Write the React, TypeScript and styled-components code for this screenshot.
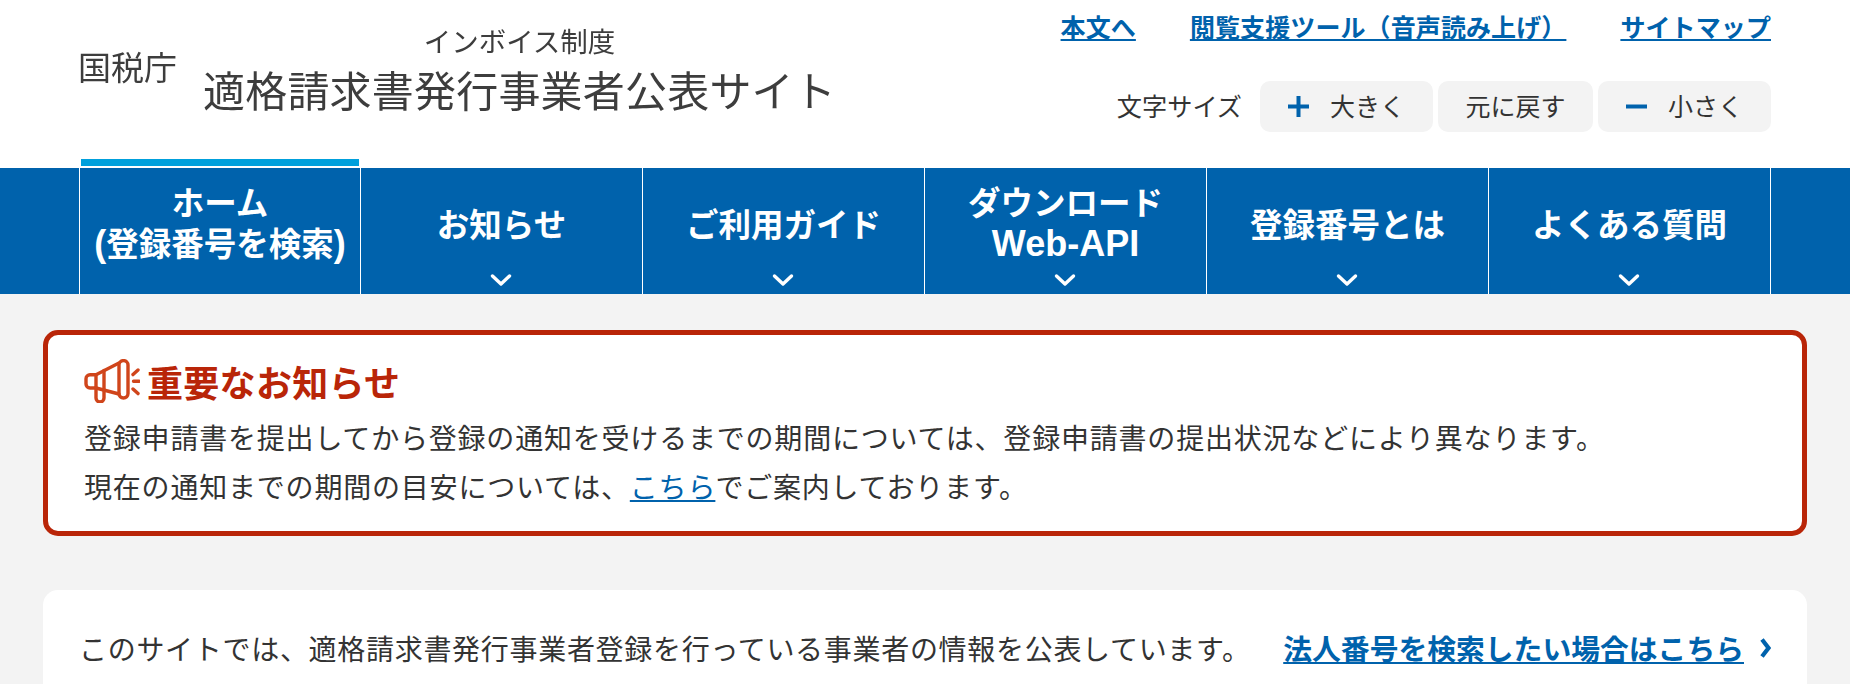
import React from "react";
import styled, { createGlobalStyle } from "styled-components";

const font = `"Noto Sans CJK JP", "Noto Sans", sans-serif`;

const Global = createGlobalStyle`
  html, body { margin: 0; padding: 0; background: #f3f3f3; font-family: ${font}; }
  body { height: 684px; overflow: hidden; }
`;

const Header = styled.header`
  height: 168px;
  background: #fff;
  display: flex;
  justify-content: space-between;
  padding: 0 79px 0 78px;
`;
const Logo = styled.div`
  display: flex;
  align-items: flex-start;
  color: #3d3d3d;
  filter: blur(0.5px);
`;
const Agency = styled.div`
  font-size: 33px;
  line-height: 40px;
  margin-top: 46px;
  margin-right: 26px;
  width: 99px;
  white-space: nowrap;
`;
const LogoText = styled.div`
  display: flex;
  flex-direction: column;
  align-items: center;
  padding-top: 21px;
`;
const Sub = styled.div`
  font-size: 27.5px;
  line-height: 38px;
`;
const SiteName = styled.div`
  font-size: 42px;
  line-height: 60px;
  letter-spacing: 0.2px;
  white-space: nowrap;
`;
const Tools = styled.div`
  display: flex;
  flex-direction: column;
  align-items: flex-end;
  padding-top: 8px;
`;
const TopLinks = styled.div`
  display: flex;
  gap: 54px;
`;
const TopLink = styled.a`
  font-size: 25px;
  line-height: 36px;
  letter-spacing: 0.1px;
  font-weight: 700;
  color: #0062ac;
  text-decoration: underline;
  white-space: nowrap;
`;
const SizeRow = styled.div`
  display: flex;
  align-items: center;
  margin-top: 37px;
  gap: 5px;
`;
const SizeLabel = styled.span`
  font-size: 25.2px;
  color: #333;
  margin-right: 13px;
  padding-bottom: 4px;
  white-space: nowrap;
`;
const SizeButton = styled.button<{ $w: number }>`
  width: ${(p) => p.$w}px;
  height: 51px;
  border: 0;
  border-radius: 10px;
  background: #f3f3f3;
  color: #333;
  font-family: ${font};
  font-size: 25px;
  display: flex;
  align-items: center;
  justify-content: center;
  gap: 21px;
  padding: 0 0 4px;
  white-space: nowrap;
`;
const IconBox = styled.svg`
  transform: translateY(2px);
`;
const Nav = styled.nav`
  height: 126px;
  background: #0062ac;
  padding-left: 79px;
  display: grid;
  grid-template-columns: 281px repeat(4, 282px) 283px;
`;
const NavItem = styled.a`
  position: relative;
  box-sizing: border-box;
  border-left: 1px solid #fff;
  &:last-child { border-right: 1px solid #fff; }
  color: #fff;
  font-size: 32.5px;
  font-weight: 700;
  line-height: 41px;
  text-align: center;
  text-decoration: none;
  display: flex;
  align-items: center;
  justify-content: center;
  padding-bottom: 18px;
  white-space: nowrap;
`;
const Latin = styled.span`
  font-family: "Liberation Sans", sans-serif;
  font-size: 36px;
`;
const ActiveBar = styled.span`
  position: absolute;
  left: 1px;
  right: 1px;
  top: -9px;
  height: 7px;
  background: #00a0dc;
`;
const Chevron = styled.svg`
  position: absolute;
  left: 50%;
  bottom: 7px;
  margin-left: -12px;
`;
const Main = styled.main`
  padding: 36px 43px 0 43px;
`;
const Alert = styled.section`
  height: 206px;
  box-sizing: border-box;
  border: 5px solid #b92508;
  border-radius: 15px;
  background: #fff;
  padding: 21px 36px 0 36px;
`;
const AlertTitle = styled.h2`
  margin: 0 0 7px;
  display: flex;
  align-items: center;
  gap: 7px;
  color: #b92508;
  font-size: 36px;
  letter-spacing: 0.3px;
  line-height: 50px;
  font-weight: 700;
`;
const AlertText = styled.p`
  margin: 0;
  font-size: 28px;
  line-height: 49px;
  letter-spacing: 0.8px;
  color: #333;
  white-space: nowrap;
`;
const TextLink = styled.a`
  color: #0062ac;
  text-decoration: underline;
`;
const Card = styled.section`
  margin-top: 54px;
  height: 140px;
  background: #fff;
  border-radius: 15px 15px 0 0;
  padding: 34px 36px 0 36px;
  display: flex;
  justify-content: space-between;
  align-items: flex-start;
`;
const CardText = styled.p`
  margin: 0;
  font-size: 28px;
  line-height: 48px;
  letter-spacing: 0.7px;
  color: #333;
  white-space: nowrap;
`;
const LawLink = styled.a`
  display: flex;
  align-items: center;
  gap: 16px;
  font-size: 28.8px;
  line-height: 48px;
  font-weight: 700;
  color: #0062ac;
  text-decoration: none;
  white-space: nowrap;
  span { text-decoration: underline; }
`;

const ChevronDown = () => (
  <Chevron width="22" height="14" viewBox="0 0 22 14" fill="none">
    <path d="M2.5 3l8.5 8 8.5-8" stroke="#fff" strokeWidth="3.4" strokeLinecap="round" strokeLinejoin="round" />
  </Chevron>
);

const Megaphone = () => (
  <svg width="56" height="44" viewBox="0 0 56 44" fill="none" stroke="#d0451b" strokeWidth="3.4" strokeLinejoin="round" strokeLinecap="round">
    <path d="M12 15.7H6a4 4 0 0 0-4 4V25a4 4 0 0 0 4 4h6z" />
    <path d="M12 15.7L35 4M12 29l23 6" />
    <path d="M20 11.5v19.5" />
    <rect x="35" y="1.6" width="9" height="37.4" rx="4.5" />
    <path d="M12 29v10a4 4 0 0 0 8 0v-8" />
    <path d="M49 15.6l5-4.6M49.5 22.3h5.5M49 30l5 4.6" />
  </svg>
);

const Plus = () => (
  <IconBox width="21" height="21" viewBox="0 0 21 21"><path d="M10.5 0v21M0 10.5h21" stroke="#0062ac" strokeWidth="4" /></IconBox>
);
const Minus = () => (
  <IconBox width="21" height="21" viewBox="0 0 21 21"><path d="M0 10.5h21" stroke="#0062ac" strokeWidth="4" /></IconBox>
);
const ArrowRight = () => (
  <svg width="11" height="20" viewBox="0 0 11 20" fill="none"><path d="M2 1.5l6.5 8.5L2 18.5" stroke="#0062ac" strokeWidth="4.2" /></svg>
);

const navItems: { label: React.ReactNode; active?: boolean; chevron?: boolean }[] = [
  { label: <>ホーム<br /><Latin>(</Latin>登録番号を検索<Latin>)</Latin></>, active: true },
  { label: "お知らせ", chevron: true },
  { label: "ご利用ガイド", chevron: true },
  { label: <>ダウンロード<br /><Latin>Web-API</Latin></>, chevron: true },
  { label: "登録番号とは", chevron: true },
  { label: "よくある質問", chevron: true },
];

export default function App() {
  return (
    <>
      <Global />
      <Header>
        <Logo>
          <Agency>国税庁</Agency>
          <LogoText>
            <Sub>インボイス制度</Sub>
            <SiteName>適格請求書発行事業者公表サイト</SiteName>
          </LogoText>
        </Logo>
        <Tools>
          <TopLinks>
            <TopLink href="#">本文へ</TopLink>
            <TopLink href="#">閲覧支援ツール（音声読み上げ）</TopLink>
            <TopLink href="#">サイトマップ</TopLink>
          </TopLinks>
          <SizeRow>
            <SizeLabel>文字サイズ</SizeLabel>
            <SizeButton $w={173}><Plus />大きく</SizeButton>
            <SizeButton $w={155}>元に戻す</SizeButton>
            <SizeButton $w={173}><Minus />小さく</SizeButton>
          </SizeRow>
        </Tools>
      </Header>
      <Nav>
        {navItems.map((n, i) => (
          <NavItem href="#" key={i}>
            {n.active && <ActiveBar />}
            <span>{n.label}</span>
            {n.chevron && <ChevronDown />}
          </NavItem>
        ))}
      </Nav>
      <Main>
        <Alert>
          <AlertTitle><Megaphone />重要なお知らせ</AlertTitle>
          <AlertText>登録申請書を提出してから登録の通知を受けるまでの期間については、登録申請書の提出状況などにより異なります。</AlertText>
          <AlertText>現在の通知までの期間の目安については、<TextLink href="#">こちら</TextLink>でご案内しております。</AlertText>
        </Alert>
        <Card>
          <CardText>このサイトでは、適格請求書発行事業者登録を行っている事業者の情報を公表しています。</CardText>
          <LawLink href="#"><span>法人番号を検索したい場合はこちら</span><ArrowRight /></LawLink>
        </Card>
      </Main>
    </>
  );
}
